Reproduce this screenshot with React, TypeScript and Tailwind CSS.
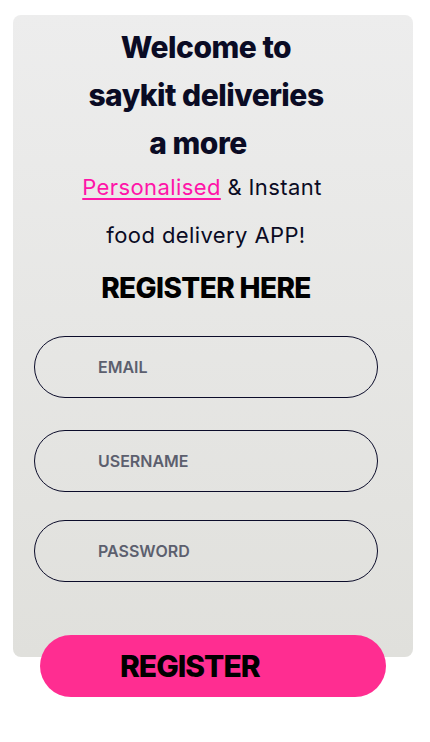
import { useState } from 'react';

const font = { fontFamily: 'Inter, "Noto Sans", sans-serif' };

function Field({ label, type = 'text' }: { label: string; type?: string }) {
  const [value, setValue] = useState('');
  return (
    <input
      type={type}
      value={value}
      onChange={(e) => setValue(e.target.value)}
      placeholder={label}
      className="w-[344px] h-[62px] rounded-full border border-[#0b0c2a] bg-transparent pl-[63px] text-[16px] font-semibold text-[#5c5f6e] placeholder:text-[#5c5f6e] outline-none"
    />
  );
}

export default function App() {
  return (
    <div className="min-h-[742px] bg-white pt-[15px] pl-[13px]" style={font}>
      {/* Card */}
      <div className="w-[400px] h-[642px] rounded-lg bg-gradient-to-b from-[#ededed] to-[#e0e0dc] pr-[14px] flex flex-col items-center">
        <h1 className="mt-[8px] text-center text-[30px] leading-[48px] font-extrabold tracking-[-0.5px] text-[#0a0b24]">
          Welcome to
          <br />
          saykit deliveries
          <br />
          <span className="pr-[16px]">a more</span>
        </h1>
        <p className="mt-[-4px] text-center text-[22px] leading-[48px] tracking-[0.4px] text-[#0a0b24]">
          <span className="pr-[8px]">
            <span className="text-[#ff14a8] underline underline-offset-[3px] decoration-[2px]">Personalised</span> &amp; Instant
          </span>
          <br />
          food delivery APP!
        </p>
        <h2 className="mt-[4px] text-[28px] leading-[50px] font-extrabold tracking-[-0.6px] text-black">
          REGISTER HERE
        </h2>

        {/* Form */}
        <div className="mt-[23px] flex flex-col">
          <Field label="EMAIL" />
          <div className="mt-[32px]">
            <Field label="USERNAME" />
          </div>
          <div className="mt-[28px]">
            <Field label="PASSWORD" type="password" />
          </div>
        </div>
      </div>

      {/* Register button */}
      <button className="relative -mt-[22px] ml-[27px] w-[346px] h-[62px] rounded-full bg-[#ff2d91] flex items-center pl-[80px] text-[30px] font-extrabold tracking-[-1px] text-black">
        REGISTER
      </button>
    </div>
  );
}
